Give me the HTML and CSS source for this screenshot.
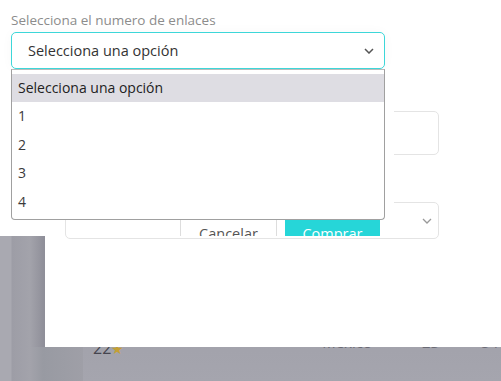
FILE: index.html
```html
<!DOCTYPE html>
<html lang="es">

<head>
    <meta charset="UTF-8">
    <meta name="viewport" content="width=device-width, initial-scale=1.0">
    <title>Enlaces</title>
    <link rel="stylesheet" href="styles.css">
</head>

<body>
    <section class="sheet">
        <label class="label" for="links">Selecciona el numero de enlaces</label>
        <div class="select-wrap">
            <div class="select" id="links">
                <span>Selecciona una opción</span>
                <svg class="chev" width="10" height="6" viewBox="0 0 10 6"><path d="M1 1l4 4 4-4" fill="none" stroke="#555" stroke-width="1.5"/></svg>
            </div>
            <!-- Open dropdown -->
            <ul class="dropdown">
                <li class="active">Selecciona una opción</li>
                <li>1</li>
                <li>2</li>
                <li>3</li>
                <li>4</li>
            </ul>
        </div>

        <!-- Form under the dropdown -->
        <div class="field"></div>
        <div class="field field-select">
            <div class="actions">
                <span class="btn-cancel">Cancelar</span>
                <span class="btn-buy">Comprar</span>
            </div>
            <svg class="chev chev-light" width="10" height="6" viewBox="0 0 10 6"><path d="M1 1l4 4 4-4" fill="none" stroke="#999" stroke-width="1.3"/></svg>
        </div>
    </section>

    <div class="overlay-row">
        <div class="side"></div>
        <div class="panel"></div>
    </div>

    <footer class="table-row">
        <div class="side side-low"></div>
        <div class="cells">
            <span class="rating">22<span class="star">&#9733;</span></span>
            <span class="country">Mexico</span>
            <span class="num">23</span>
            <span class="num">54</span>
        </div>
    </footer>
</body>

</html>
```

FILE: styles.css
```css
* {
    box-sizing: border-box;
}

body {
    margin: 0;
    padding: 0;
    width: 501px;
    height: 381px;
    overflow: hidden;
    font-family: "Open Sans", "Noto Sans", sans-serif;
    background: linear-gradient(#8b8b94, #a5a5ae);
}

/* Top white area */
.sheet {
    position: relative;
    background-color: #fff;
    height: 236px;
    padding: 11px 0 0 11px;
}

.label {
    display: block;
    color: #8c8c8c;
    font-size: 13.5px;
    line-height: 19px;
    height: 21px;
}

.select-wrap {
    position: relative;
    width: 374px;
    z-index: 2;
}

.select {
    height: 37px;
    border: 1px solid #3dd7d9;
    border-radius: 5px;
    padding: 0 10px 0 16px;
    display: flex;
    align-items: center;
    justify-content: space-between;
    color: #333;
    font-size: 14.5px;
    box-shadow: 0 0 12px rgba(0, 0, 0, 0.03);
    background-color: #fff;
}

.chev {
    display: block;
}

/* Dropdown list */
.dropdown {
    position: absolute;
    top: 37px;
    left: 0;
    right: 0;
    margin: 0;
    padding: 4px 0 3px;
    list-style: none;
    background-color: #fff;
    border: 1px solid #a0a0a0;
    border-top-color: #bbb;
    border-radius: 0 0 4px 4px;
    box-shadow: 9px 0 0 #fff;
}

.dropdown li {
    height: 28.4px;
    line-height: 28.4px;
    padding-left: 6px;
    font-size: 14px;
    color: #3a3a3a;
}

.dropdown li.active {
    background-color: #dedde3;
    color: #222;
}

/* Fields below */
.field {
    margin: 42px 0 0 54px;
    width: 374px;
    height: 44px;
    border: 1px solid #e4e4e4;
    border-radius: 5px;
}

.field-select {
    margin-top: 47px;
    height: 37px;
    position: relative;
    display: flex;
    justify-content: flex-end;
    align-items: center;
    padding-right: 6px;
}

.actions {
    position: absolute;
    left: 114px;
    top: 17px;
    height: 16px;
    overflow: hidden;
    display: flex;
}

.actions span {
    display: block;
    height: 28px;
    line-height: 28px;
    font-size: 14.5px;
    text-align: center;
}

.btn-cancel {
    width: 97px;
    color: #555;
    border-left: 1px solid #ddd;
    border-right: 1px solid #ddd;
}

.btn-buy {
    width: 95px;
    margin-left: 8px;
    color: #fff;
    background-color: #26d6d8;
}

.chev-light {
    margin-top: 1px;
}

/* Dimmed page */
.overlay-row {
    display: flex;
    height: 111px;
}

.side {
    width: 45px;
    background: linear-gradient(90deg, #a9a9b1 0, #a9a9b1 11px, #9d9da6 12px, #a3a3ab 30px, #8f8f99 44px);
}

.panel {
    flex: 1;
    background-color: #fff;
}

.table-row {
    display: flex;
    height: 34px;
    overflow: hidden;
}

.side-low {
    width: 83px;
    background: linear-gradient(90deg, #a9a9b1 0, #a9a9b1 11px, #9d9da6 12px, #a3a3ab 30px, #989aa2 43px, #9f9fa7 83px);
}

.cells {
    flex: 1;
    display: flex;
    align-items: flex-start;
    margin-top: -8px;
    font-size: 15px;
    line-height: 18px;
    color: #6a6a74;
}

.rating {
    margin-left: 10px;
    font-size: 16px;
    color: #45454f;
}

.star {
    color: #c4a035;
    font-size: 14px;
}

.country {
    margin: -6px 0 0 198px;
}

.num {
    margin: -6px 0 0 50px;
}

.num + .num {
    margin-left: 42px;
}
```
